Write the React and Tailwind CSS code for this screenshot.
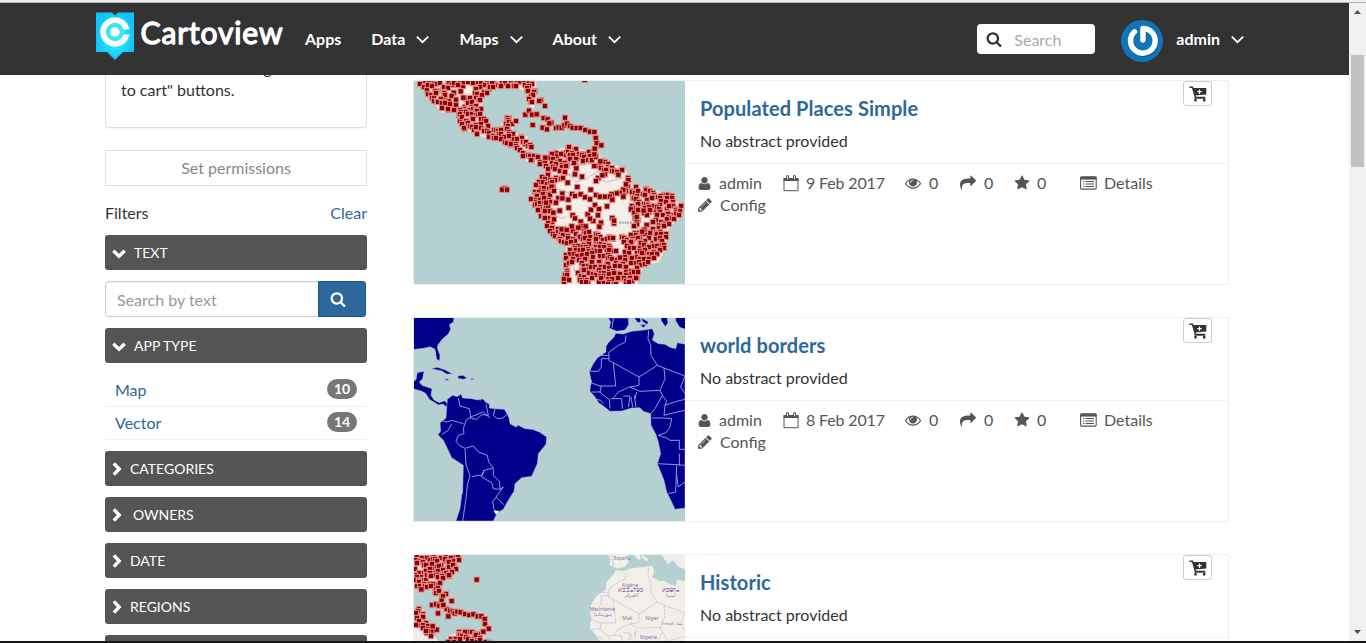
import React from "react";

const ICONS = {
  user: "M1600 1405q0 120-73 189.5t-194 69.5h-874q-121 0-194-69.5t-73-189.5q0-53 3.5-103.5t14-109 26.5-108.5 43-97.5 62-81 85.5-53.5 111.5-20q10 0 43 21.5t73 48 107 48 135 21.5 135-21.5 107-48 73-48 43-21.5q61 0 111.5 20t85.5 53.5 62 81 43 97.5 26.5 108.5 14 109 3.5 103.5zm-320-893q0 159-112.5 271.5t-271.5 112.5-271.5-112.5-112.5-271.5 112.5-271.5 271.5-112.5 271.5 112.5 112.5 271.5z",
  search: "M1216 832q0-185-131.5-316.5t-316.5-131.5-316.5 131.5-131.5 316.5 131.5 316.5 316.5 131.5 316.5-131.5 131.5-316.5zm512 832q0 52-38 90t-90 38q-54 0-90-38l-343-342q-179 124-399 124-143 0-273.5-55.5t-225-150-150-225-55.5-273.5 55.5-273.5 150-225 225-150 273.5-55.5 273.5 55.5 225 150 150 225 55.5 273.5q0 220-124 399l343 343q37 37 37 90z",
  star: "M1728 647q0 22-26 48l-363 354 86 500q1 7 1 20 0 21-10.5 35.5t-30.5 14.5q-19 0-40-12l-449-236-449 236q-22 12-40 12-21 0-31.5-14.5t-10.5-35.5q0-6 2-20l86-500-364-354q-25-27-25-48 0-37 56-46l502-73 225-455q19-41 49-41t49 41l225 455 502 73q56 9 56 46z",
  share: "M1792 640q0 26-19 45l-512 512q-19 19-45 19t-45-19-19-45v-256h-224q-98 0-175.5 6t-154 21.5-133 42.5-105.5 69.5-80 101-48.5 138.5-17.5 181q0 55 5 123 0 6 2.5 23.5t2.5 26.5q0 15-8.5 25t-23.5 10q-16 0-28-17-7-9-13-22t-13.500-30-10.500-24q-127-285-127-451 0-199 53-333 162-403 875-403h224v-256q0-26 19-45t45-19 45 19l512 512q19 19 19 45z",
  pencil: "M491 1536l91-91-235-235-91 91v107h128v128h107zm523-928q0-22-22-22-10 0-17 7l-542 542q-7 7-7 17 0 22 22 22 10 0 17-7l542-542q7-7 7-17zm-54-192l416 416-832 832h-416v-416zm683 96q0 53-37 90l-166 166-416-416 166-165q36-38 90-38 53 0 91 38l235 234q37 39 37 91z",
  eye: "M1664 960q-152-236-381-353 61 104 61 225 0 185-131.5 316.5t-316.5 131.5-316.5-131.5-131.5-316.5q0-121 61-225-229 117-381 353 133 205 333.5 326.5t434.5 121.5 434.5-121.5 333.5-326.5zm-720-384q0-20-14-34t-34-14q-125 0-214.5 89.5t-89.5 214.5q0 20 14 34t34 14 34-14 14-34q0-86 61-147t147-61q20 0 34-14t14-34zm848 384q0 34-20 69-140 230-376.5 368.5t-499.5 138.5-499.5-139-376.5-368q-20-35-20-69t20-69q140-229 376.5-368t499.5-139 499.5 139 376.5 368q20 35 20 69z",
};

function Icon({ name, className }) {
  return (
    <svg viewBox="0 0 1792 1792" fill="currentColor" className={"shrink-0 " + className}>
      <path d={ICONS[name]} />
    </svg>
  );
}

function CalendarIcon() {
  return (
    <svg viewBox="0 0 16 17" className="h-[17px] w-4 shrink-0" fill="none" stroke="currentColor">
      <path d="M1 3.5h14v12.2H1z" strokeWidth="1" />
      <path d="M.5 3h15v3H.5z" fill="currentColor" stroke="none" />
      <path d="M4.5 1.5v2.500M11.500 1.500v2.500" strokeWidth="3" strokeLinecap="round" />
      <path d="M4.5 1v3.200M11.500 1v3.200" stroke="#e4e4e4" strokeWidth="1" />
    </svg>
  );
}

function ListIcon() {
  return (
    <svg viewBox="0 0 17 14" className="h-[14px] w-[17px] shrink-0" fill="none" stroke="currentColor">
      <rect x=".6" y=".9" width="15.6" height="12.2" rx="1.2" strokeWidth="1.1" />
      <path d="M.5 2.2h16" strokeWidth="2.8" />
      <path d="M3 5.5h1.2M3 8h1.2M3 10.5h1.2M5.5 5.5h8.5M5.5 8h8.5M5.5 10.5h8.5" strokeWidth="1.1" />
    </svg>
  );
}

function CartIcon() {
  return (
    <svg viewBox="0 0 18 16" className="mt-px h-4 w-[18px]" fill="none" stroke="#333">
      <path d="M.5 1.3h3l3 10.3h9.5" strokeWidth="1.5" />
      <path d="M4 2h13.300v6.600L6 9.600z" fill="#333" stroke="none" />
      <path d="M5.500 12h11" strokeWidth="1.3" />
      <path d="M5.3 13h2.4v2.5H5.3zM14 13h2.4v2.5H14z" fill="#333" stroke="none" />
      <path d="M10.500 3.500v4.400M8.300 5.700h4.400" stroke="#fff" strokeWidth="1.2" />
    </svg>
  );
}

function NavChevron() {
  return (
    <svg viewBox="0 0 13 9" className="h-[9px] w-[13px]" fill="none" stroke="#fff" strokeWidth="1.8">
      <path d="M.8 1.6 6.5 7.2 12.2 1.6" />
    </svg>
  );
}

function Chevron({ open }) {
  return open ? (
    <svg viewBox="0 0 14 10" className="-ml-px mr-px mt-[3px] h-[10px] w-[14px]" fill="none" stroke="#fff" strokeWidth="3.4">
      <path d="M1.3 1.8 7 7.2l5.7-5.4" />
    </svg>
  ) : (
    <svg viewBox="0 0 10 14" className="-ml-px mr-px h-[14px] w-[10px]" fill="none" stroke="#fff" strokeWidth="3.4">
      <path d="M1.8 1.3 7.2 7l-5.4 5.7" />
    </svg>
  );
}

/* ---------- thumbnails ---------- */

function inside(x, y, poly) {
  let hit = false;
  for (let i = 0, j = poly.length - 1; i < poly.length; j = i++) {
    const [xi, yi] = poly[i];
    const [xj, yj] = poly[j];
    if (yi > y !== yj > y && x < ((xj - xi) * (y - yi)) / (yj - yi) + xi) hit = !hit;
  }
  return hit;
}

function pts(s) {
  return s.split(" ").map((p) => p.split(",").map(Number));
}

function scatter(polys, holes, seed, step) {
  let s = seed;
  const rnd = () => {
    s = (s * 16807) % 2147483647;
    return s / 2147483647;
  };
  const out = [];
  for (let y = 12; y < 630; y += step) {
    for (let x = 12; x < 830; x += step) {
      const px = x + (rnd() - 0.5) * 16;
      const py = y + (rnd() - 0.5) * 16;
      if (polys.some((p) => inside(px, py, p)) && !holes.some((h) => inside(px, py, h))) {
        out.push([Math.round(px / 3) * 3, Math.round(py / 3) * 3]);
      }
    }
  }
  return out;
}

const MEXICO = "24,12 378,12 380,60 372,98 358,90 352,45 300,32 240,42 217,70 212,110 242,152 270,158 285,127 322,125 304,168 350,180 370,212 345,225 385,240 412,252 405,268 350,256 312,212 270,195 210,180 148,152 135,108 95,110 56,60";
const SOUTH = "410,232 475,211 560,230 590,259 645,277 663,325 700,337 780,354 814,390 807,425 775,460 765,520 747,558 700,570 682,626 455,626 468,560 468,508 418,472 398,430 362,375 376,320 405,295 400,260";
const HOLES = [
  "110,38 180,28 200,45 150,80 112,72",
  "480,262 545,265 580,290 640,290 650,340 600,362 560,362 520,358 470,354 430,350 436,325 462,305 475,290",
  "424,350 490,357 540,360 660,362 674,474 590,482 560,465 520,462 462,458 435,445 418,400",
  "685,415 730,420 722,460 690,470",
  "603,495 640,495 640,552 605,525",
  "478,560 503,568 503,620 480,620",
].map(pts);
const ISLES = "346,116 357,104 366,116 380,115 401,126 413,130 424,140 418,142 438,156 446,154 455,155 463,148 471,143 480,150 488,155 500,156 512,156 526,162 540,167 553,168 557,186 560,201 574,208 554,218 553,235 465,125 368,147 398,155 411,160 405,90 393,72 388,75 283,337 276,341 291,341 364,213 524,12 406,245";
const AMAZON = "499,277 495,295 516,302 473,320 502,333 542,341 565,306 558,315 585,295 577,298 625,296 640,341 629,350 620,352 605,355 558,357 570,362 585,362 600,362 640,362 495,360 512,355 525,364 540,370 457,353 445,367 457,367 475,371 438,380 476,395 449,404 430,410 533,415 543,401 555,387 567,399 591,391 607,371 564,418 550,435 540,428 573,440 488,418 495,427 485,451 512,437 515,450 505,455 527,451 568,452 607,426 612,442 612,434 663,400 673,410 672,450 680,430 680,423 684,402 701,404 710,447 703,461 697,467 432,430 455,460 470,462 131,50 125,60 160,65 138,71 152,46 655,312 648,325 618,525 630,545 553,270 571,256 425,332 420,356 408,380 432,345";

const POPULATED = [
  ...scatter([pts(MEXICO), pts(SOUTH)], HOLES, 4127, 12),
  ...pts(ISLES),
  ...pts(AMAZON),
];

const HISTORIC = [
  ...scatter(
    [
      "12,15 158,15 140,60 112,88 94,96 92,122 118,140 84,150 68,118 12,112",
      "12,182 45,176 38,212 75,235 62,266 12,240",
      "116,262 160,240 215,252 240,282 100,282",
    ].map(pts),
    [pts("62,215 72,215 72,230 62,230")],
    907,
    11
  ),
  ...pts("66,168 78,166 88,170 98,171 110,180 120,185 128,188 134,193 142,188 152,190 165,195 178,198 190,196 203,202 214,202 224,210 225,225 236,239 220,248 125,156 84,193 115,202 200,92 34,121 80,242 68,232 95,155 100,168"),
];

function Dots({ list }) {
  return (
    <g fill="#8b0000" stroke="#e38f8c" strokeWidth="3">
      {list.map(([x, y], i) => (
        <rect key={i} x={x - 8} y={y - 8} width="16" height="16" />
      ))}
    </g>
  );
}

const AFRICA = "M617 64 640 66 665 58 695 55 727 50 733 66 727 84 745 95 765 97 780 106 797 110 802 92 825 97V588L795 592 785 570 770 540 762 505 752 480 742 455 752 425 745 390 738 368 723 340 722 305 700 298 690 287 665 288 635 297 600 298 580 282 566 272 555 255 540 238 541 222 545 210 538 180 548 158 562 138 588 120 588 103 595 92 612 75Z";
const AFRICA_LINES = "M648 70 646 90 625 100 597 120 596 130M568 130H597V145L687 195V220L655 226 625 240 610 258M597 140H574V165L565 178H540M610 152 617 222H570L545 213M687 195 742 160 723 130 722 100 714 80 716 55M742 160 762 168 825 192M762 168 765 200 750 235 690 238 660 225M750 235 757 250 735 290 722 305M757 250 770 268 765 280 800 268 825 262M825 192 812 225 825 245M765 280 762 310 780 305 825 295M727 318H762L785 320 780 345 768 362 745 370 770 378 780 385H808V412H825M742 455 800 458 825 460M808 425V460M800 460 797 540 775 545M800 490 805 525 825 510M574 222 570 240 580 250 598 262 600 290M545 240 570 240M602 260H635L637 290M640 252H660L655 285M663 255 668 285M673 250 678 285M560 262 572 265 580 275M680 240 675 260";

function PopulatedMap() {
  return (
    <svg viewBox="12 15 813 609" className="block h-[203px] w-[271px]">
      <rect x="0" y="0" width="840" height="640" fill="#b5d0d0" />
      <polygon points={MEXICO} fill="#f2efe9" />
      <polygon points={SOUTH} fill="#f2efe9" />
      <path d="M430 335 465 345 482 355M470 295 500 318 530 308 565 285M570 310 590 318 640 305M440 420 455 428 468 420M500 270 470 282M490 570 498 600" fill="none" stroke="#ccb4d4" strokeWidth="3" />
      <path d="M628 440h40M480 265h50M468 296h22" stroke="#a39ac4" strokeWidth="7" strokeDasharray="5 3" />
      <Dots list={POPULATED} />
    </svg>
  );
}

function BordersMap() {
  return (
    <svg viewBox="12 18 813 609" className="block h-[203px] w-[271px]">
      <rect x="0" y="0" width="840" height="640" fill="#b5d0d0" />
      <g fill="#00008b" stroke="#b9b9ee" strokeWidth="1.5" strokeLinejoin="round">
        <path d="M0 0H135L130 30 118 38 122 52 115 66 98 80 84 98 82 108 90 130 89 146 80 142 75 112 60 104 45 108 0 114Z" />
        <path d="M0 215 18 203 22 182 42 178 38 200 28 210 36 220 66 230 63 250 72 264 88 272 104 266 113 276 110 285 98 276 86 279 58 262 48 245 36 238 0 228Z" />
        <path d="M64 170 82 166 106 174 128 186 110 186 94 176ZM144 192 158 190 172 198 160 202 144 199ZM106 201h9v4h-9ZM182 200h9v3h-9Z" />
        <path d="M112 262 128 250 142 254 153 246 158 258 185 260 203 264 220 260 226 270 238 276 238 288 255 290 283 292 290 303 297 318 300 335 318 345 325 340 345 350 366 352 388 360 410 375 408 397 385 425 382 455 365 493 335 497 315 515 312 538 295 565 280 592 262 602 250 627H138L150 590 155 550 158 540 160 460 125 437 110 405 100 385 84 368 92 358 90 332 108 318Z" />
        <path d="M595 18H655L656 38 645 54 620 58 598 48 602 30ZM673 18h17l3 11-9 3ZM695 18l20 12-4 8-14-10ZM752 10h18l4 22-8 12-12-18ZM797 10h30v42l-18-6-12-20ZM690 37l18 2-8 8Z" />
        <path d={AFRICA} />
        <path d={AFRICA_LINES} fill="none" strokeWidth="2.4" />
        <path fill="none" strokeWidth="2.4" d="M145 258 150 282 178 290 182 315 168 325 160 350 162 365 145 370 138 388 150 402 165 408 168 458 180 490 172 520 168 560 158 627M95 325 110 330 125 325 160 335M125 335 115 355 95 368M180 318 200 322 215 308 235 310 228 275M182 315 220 300 240 318M255 290 250 310 262 320 278 318 290 308M168 408 190 402 205 420 232 430 236 450 250 468 222 475 216 490 205 490 185 494M222 475 215 495 245 512 250 530 270 532 268 508 250 490 250 470M270 532 280 525 258 555 282 578M258 555 248 570 252 592 262 600M610 18 606 48" />
      </g>
      <path d="M250 596l18 0-10 12Z" fill="#f2efe9" />
      <path d="M105 140l12 12m8-2 14 10m6 0 10 14M188 204l30 4 8 12 2 40-18 4M460 38l20 8M535 122l25 6M478 210l12 10M12 337h6" fill="none" stroke="#bdbdf0" strokeWidth="2.5" strokeDasharray="5 5" />
    </svg>
  );
}

function HistoricMap() {
  return (
    <svg viewBox="12 18 813 609" className="block h-[203px] w-[271px]">
      <rect x="0" y="0" width="840" height="640" fill="#b5d0d0" />
      <g fill="#f2efe9">
        <path d={AFRICA} />
        <path d="M595 18H655L656 38 645 54 620 58 598 48 602 30ZM673 18h17l3 11-9 3ZM695 18l20 12-4 8-14-10ZM750 10h75v50l-18-6-20-20-12 12-14-18Z" />
        <path d="M0 0H150L115 66 84 98 90 146 75 112 0 114ZM0 182H42L36 220 66 230 63 250 88 280H0ZM112 262 153 246 220 260 240 290H112Z" />
      </g>
      <path d={AFRICA_LINES} fill="none" stroke="#d6b8dc" strokeWidth="2.5" strokeDasharray="9 2" />
      <path d="M606 18 610 50" stroke="#d6b8dc" strokeWidth="2.5" />
      <g fill="#8e6fa6" fontFamily="Noto Sans, sans-serif" fontSize="15" textAnchor="middle">
        <text x="660" y="113">Algérie</text>
        <text x="660" y="129">ⵍⵣⵣⴰⵢⴻⵔ</text>
        <text x="664" y="144">الجزائر</text>
        <text x="780" y="129">ⵍⵉⴱⵢⴰ</text>
        <text x="782" y="144">ليبيا</text>
        <text x="577" y="185">Mauritanie</text>
        <text x="580" y="201">موريتانيا</text>
        <text x="652" y="213">Mali</text>
        <text x="726" y="213">Niger</text>
        <text x="786" y="228" fontSize="13">Tchad تشاد</text>
        <text x="715" y="271">Nigeria</text>
        <text x="637" y="32">España</text>
      </g>
      <Dots list={HISTORIC} />
    </svg>
  );
}

/* ---------- page parts ---------- */

function Logo() {
  return (
    <div className="flex w-[188px] items-start">
      <svg viewBox="0 0 188 50" className="h-[50px] w-[188px] overflow-visible">
        <defs>
          <radialGradient id="pin">
            <stop offset="0" stopColor="#5ff2fa" />
            <stop offset=".6" stopColor="#22dcf8" />
            <stop offset="1" stopColor="#10c4fa" />
          </radialGradient>
        </defs>
        <path d="M0 1.500H16L19 4.500 22 1.500H38V41H27L19 49 11 41H0Z" fill="url(#pin)" />
        <path d="M29.800 16.200A11.800 11.800 0 1 0 29.800 25.800" fill="none" stroke="#fff" strokeWidth="5.800" />
        <circle cx="19" cy="21" r="9" fill="#45e3f9" />
        <path d="M26.500 15.500H33.200V18.600H27.500ZM27.500 23.400H33.200V26H26.500Z" fill="#fff" />
        <circle cx="19" cy="21" r="4.700" fill="#fff" />
        <text x="44.500" y="33" textLength="142" lengthAdjust="spacing" fontFamily="Lato, sans-serif" fontSize="30" fontWeight="400" fill="#fff" stroke="#fff" strokeWidth="1.300" strokeLinejoin="round">
          Cartoview
        </text>
      </svg>
    </div>
  );
}

function NavItem({ label, menu }) {
  return (
    <div className="flex items-center gap-[11px]">
      <span className="leading-6">{label}</span>
      {menu && <NavChevron />}
    </div>
  );
}

function Avatar() {
  return (
    <svg viewBox="0 0 42 42" className="h-[42px] w-[42px]">
      <circle cx="21" cy="21" r="21" fill="#0f75b9" />
      <path d="M13.500 11.800A12.300 12.300 0 1 0 22 8.500V20" fill="none" stroke="#0a5687" strokeWidth="5.500" strokeLinecap="round" strokeLinejoin="round" transform="translate(.6 .8)" />
      <path d="M13.500 11.800A12.300 12.300 0 1 0 22 8.500V20" fill="none" stroke="#fff" strokeWidth="5.500" strokeLinecap="round" strokeLinejoin="round" />
    </svg>
  );
}

function Navbar() {
  return (
    <header className="relative z-10 flex h-[72px] shrink-0 bg-[#333] pl-24 text-base font-bold text-white">
      <div className="pt-2">
        <Logo />
      </div>
      <nav className="ml-[21px] flex h-[72px] items-center gap-[30px]">
        <NavItem label="Apps" />
        <NavItem label="Data" menu />
        <NavItem label="Maps" menu />
        <NavItem label="About" menu />
      </nav>
      <div className="ml-auto flex items-start pr-[105px]">
        <div className="mt-[21px] flex h-[30px] w-[118px] items-center rounded bg-white pl-[9px] font-normal">
          <Icon name="search" className="h-4 w-4 text-[#333]" />
          <span className="ml-3 pt-[2px] text-[#aaa]">Search</span>
        </div>
        <div className="ml-[26px] mt-[17px]">
          <Avatar />
        </div>
        <div className="ml-[13px] mt-6">
          <NavItem label="admin" menu />
        </div>
      </div>
    </header>
  );
}

function FilterHead({ label, open, wide }) {
  return (
    <div className="flex h-[35px] shrink-0 items-center rounded-[3px] bg-[#555] pl-2 text-sm text-white">
      <Chevron open={open} />
      <span className={wide ? "ml-[10px]" : "ml-[7px]"}>{label}</span>
    </div>
  );
}

function FacetRow({ label, count }) {
  return (
    <div className="flex h-[33px] justify-between border-b border-[#eee] px-[10px] text-[#2c689c]">
      <span className="pt-[5px] leading-[22px]">{label}</span>
      <span className="mt-[5px] flex h-5 w-[30px] items-center justify-center rounded-full bg-[#777] text-sm font-bold text-white">
        {count}
      </span>
    </div>
  );
}

function Sidebar() {
  return (
    <aside className="-mt-[19px] flex w-[262px] shrink-0 flex-col">
      <div className="h-[72px] shrink-0 rounded border border-[#ddd] px-[15px] leading-[22px] shadow-[0_1px_1px_rgba(0,0,0,0.05)]">
        <p className="whitespace-nowrap">Add resources through the "Add</p>
        <p>to cart" buttons.</p>
      </div>
      <button className="mt-[22px] h-9 shrink-0 border border-[#ddd] pb-px text-[#888]">Set permissions</button>
      <div className="mb-[11px] mt-[15px] flex h-[23px] items-center justify-between">
        <span>Filters</span>
        <span className="text-[#2c689c]">Clear</span>
      </div>
      <FilterHead label="TEXT" open />
      <div className="my-[11px] flex h-9 w-[261px] shrink-0">
        <div className="flex grow items-center rounded-l border border-r-0 border-[#ccc] pl-[11px] pt-px text-[#999] shadow-[inset_0_1px_1px_rgba(0,0,0,0.075)]">
          Search by text
        </div>
        <div className="flex w-12 items-center rounded-r-[3px] border border-[#245682] bg-[#2c689c] pl-[11px] text-white">
          <Icon name="search" className="h-4 w-4" />
        </div>
      </div>
      <FilterHead label="APP TYPE" open />
      <div className="mb-[11px] mt-[11px] shrink-0">
        <FacetRow label="Map" count="10" />
        <FacetRow label="Vector" count="14" />
      </div>
      <div className="flex flex-col gap-[11px]">
        <FilterHead label="CATEGORIES" />
        <FilterHead label="OWNERS" wide />
        <FilterHead label="DATE" />
        <FilterHead label="REGIONS" />
        <FilterHead label="" />
      </div>
    </aside>
  );
}

function AppCard({ title, date, children }) {
  return (
    <article className="relative flex h-[205px] w-[816px] shrink-0 border border-[#eee]">
      {children}
      <div className="min-w-0 grow pr-px">
        <div className="h-[83px] border-b border-[#eee] pl-[15px] pt-[15px]">
          <h3 className="text-xl font-bold leading-6 tracking-[0.08px] text-[#2c689c]">{title}</h3>
          <p className="mt-[10px] leading-[22px]">No abstract provided</p>
        </div>
        <div className="pl-3 pt-2 leading-[22px] text-[#555]">
          <div className="flex h-[22px] items-center">
            <div className="flex w-[86px] items-center gap-[7px]">
              <Icon name="user" className="h-[15px] w-[15px]" />
              admin
            </div>
            <div className="flex w-[122px] items-center gap-[7px] tracking-[-0.15px]">
              <CalendarIcon />
              {date}
            </div>
            <div className="flex w-[54px] items-center gap-2">
              <Icon name="eye" className="h-4 w-4" />0
            </div>
            <div className="flex w-[54px] items-center gap-2 pl-px">
              <Icon name="share" className="h-4 w-4" />0
            </div>
            <div className="flex w-[67px] items-center gap-[7px] pl-px">
              <Icon name="star" className="h-4 w-4" />0
            </div>
            <div className="flex items-center gap-[7px]">
              <ListIcon />
              Details
            </div>
          </div>
          <div className="flex h-[22px] items-center gap-[7px]">
            <Icon name="pencil" className="h-4 w-4" />
            Config
          </div>
        </div>
      </div>
      <button className="absolute right-4 top-0 flex h-[25px] w-[29px] items-center justify-center rounded-[3px] border border-[#ccc] bg-white">
        <CartIcon />
      </button>
    </article>
  );
}

function Scrollbar() {
  return (
    <div className="flex w-[17px] shrink-0 flex-col items-center bg-[#f1f1f1]">
      <svg viewBox="0 0 7 4" className="mt-[7px] h-1 w-[7px]">
        <path d="M3.500 0 7 4H0Z" fill="#505050" />
      </svg>
      <div className="mt-[41px] h-28 w-[13px] bg-[#c1c1c1]" />
      <svg viewBox="0 0 7 4" className="mb-[7px] mt-auto h-1 w-[7px]">
        <path d="M0 0H7L3.500 4Z" fill="#505050" />
      </svg>
    </div>
  );
}

export default function App() {
  return (
    <div className="flex h-[643px] w-[1366px] flex-col overflow-hidden bg-white font-[Lato,sans-serif] text-base text-[#333]">
      <div className="h-[3px] shrink-0 border-b border-[#b4b4b4] bg-[#f0f0f0]" />
      <div className="flex h-[638px] shrink-0">
        <div className="flex grow flex-col overflow-hidden">
          <Navbar />
          <main className="flex min-h-0 grow gap-[46px] overflow-hidden pl-[105px]">
            <Sidebar />
            <section className="flex flex-col gap-8 pt-[5px]">
              <AppCard title="Populated Places Simple" date="9 Feb 2017">
                <PopulatedMap />
              </AppCard>
              <AppCard title="world borders" date="8 Feb 2017">
                <BordersMap />
              </AppCard>
              <AppCard title="Historic" date="8 Feb 2017">
                <HistoricMap />
              </AppCard>
            </section>
          </main>
        </div>
        <Scrollbar />
      </div>
      <div className="h-[2px] shrink-0 bg-[#141414]" />
    </div>
  );
}
